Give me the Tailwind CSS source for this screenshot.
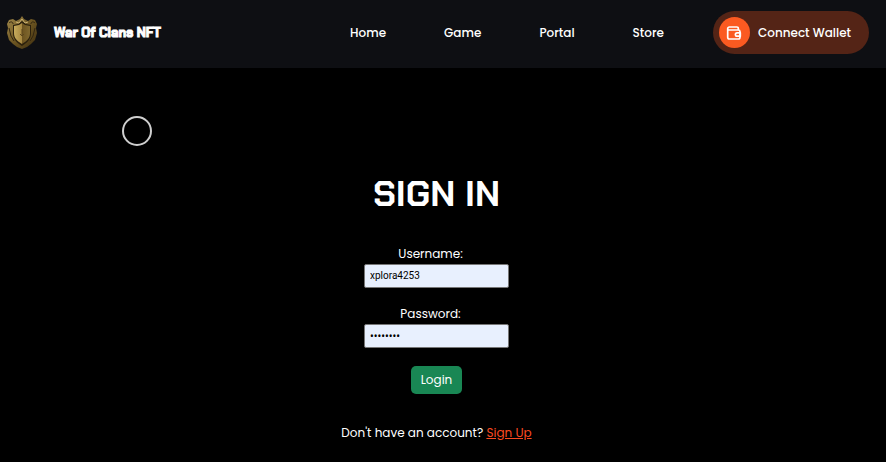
<!DOCTYPE html>
<html lang="en">
<head>
    <meta charset="UTF-8">
    <meta name="viewport" content="width=device-width, initial-scale=1.0">
    <title>War Of Clans NFT</title>
    <script src="https://cdn.jsdelivr.net/npm/@tailwindcss/browser@4"></script>
</head>
<body class="bg-black text-white font-['Poppins','Inter',sans-serif] text-[12px] leading-4 min-h-screen overflow-x-hidden">

    <!-- Navbar -->
    <header class="flex items-center justify-between bg-[#0e0f13] pl-1 pr-[17px] pt-[11px] pb-[14px]">
        <a href="#" class="flex items-center gap-4">
            <svg class="w-[34px] h-[34px]" viewBox="0 0 34 34" fill="none">
                <defs>
                    <linearGradient id="gold" x1="0" y1="0" x2="1" y2="1">
                        <stop offset="0" stop-color="#a38a4b"/>
                        <stop offset=".5" stop-color="#6d5622"/>
                        <stop offset="1" stop-color="#3b2b0d"/>
                    </linearGradient>
                    <linearGradient id="face" x1="0" y1="0" x2="1" y2="0">
                        <stop offset="0" stop-color="#c7ab5c"/>
                        <stop offset=".5" stop-color="#a68740"/>
                        <stop offset=".52" stop-color="#6d5420"/>
                        <stop offset="1" stop-color="#80682f"/>
                    </linearGradient>
                </defs>
                <path d="M18 0l2 3 4 2 3-2 4 1 2 4-1 4 1 5-2 7-4 4-4 3-5 2-5-2-4-3-4-4-2-7 1-5-1-4 2-4 4-1 3 2 4-2z" fill="url(#gold)"/>
                <path d="M18 5l4 3 5 1v8c0 6-4 10-9 13-5-3-9-7-9-13V9l5-1z" fill="#2c210d"/>
                <path d="M18 7l3 2 5 1v7c0 5-3 8-8 11-5-3-8-6-8-11v-7l5-1z" fill="url(#face)"/>
                <path d="M18 13v7M16 18l2 2 2-2" stroke="#5c461c"/>
                <path d="M5 7c2-2 4-1 4 1M31 7c-2-2-4-1-4 1M5 12l2 8 3 5M31 12l-2 8-3 5" stroke="#322510"/>
                <path d="M12 6l3 1 3-4 3 4 3-1" stroke="#c9b172"/>
            </svg>
            <span class="font-['Chakra_Petch','Roboto',sans-serif] font-bold text-[13px] [-webkit-text-stroke:1px_#fff]">War Of Clans NFT</span>
        </a>
        <div class="flex items-center gap-[49px]">
            <nav class="flex items-center gap-[58px] font-medium">
                <a href="#">Home</a>
                <a href="#">Game</a>
                <a href="#">Portal</a>
                <a href="#">Store</a>
            </nav>
            <button class="flex items-center gap-2 bg-[#542416] rounded-full py-[6px] pl-[6px] pr-[18px] font-medium">
                <span class="flex items-center justify-center w-[31px] h-[31px] rounded-full bg-[#fb5a21]">
                    <svg class="w-4 h-4" viewBox="0 0 16 16" fill="none" stroke="#fff" stroke-width="1.7" stroke-linejoin="round" stroke-linecap="round">
                        <path d="M12.3 5V3.4a1.4 1.4 0 0 0-1.4-1.4H3.4A1.7 1.7 0 0 0 1.7 3.7v8.6A1.7 1.7 0 0 0 3.4 14h8.9a1.7 1.7 0 0 0 1.7-1.7V6.6A1.7 1.7 0 0 0 12.3 5H2.5"/>
                        <path d="M14.3 7.8h-3.2a1.7 1.7 0 0 0 0 3.4h3.2z"/>
                    </svg>
                </span>
                Connect Wallet
            </button>
        </div>
    </header>

    <!-- Cursor ring -->
    <div class="absolute left-[122px] top-[116px] w-[30px] h-[30px] rounded-full border-2 border-[#cfcfcf]"></div>

    <!-- Sign in form -->
    <main class="flex flex-col items-center pt-[104px] pr-[13px]">
        <h1 class="font-['Chakra_Petch','Inter',sans-serif] font-bold text-[36px] leading-[44px]">SIGN IN</h1>
        <form class="flex flex-col items-center pt-[30px]">
            <label for="username" class="pr-3">Username:</label>
            <input id="username" type="text" value="xplora4253" class="w-[145px] h-6 mt-[2px] px-[5px] pb-[2px] rounded-xs border border-[#767676] bg-[#e8f0fe] text-black font-['Roboto',sans-serif] text-[10px]">
            <label for="password" class="pr-3 mt-[18px]">Password:</label>
            <input id="password" type="password" value="password" class="w-[145px] h-6 mt-[2px] px-[5px] rounded-xs border border-[#767676] bg-[#e8f0fe] text-black font-['Noto_Sans',sans-serif] text-[10px]">
            <button type="button" class="mt-[18px] px-[10px] py-[6px] rounded-[5px] bg-[#198754]">Login</button>
        </form>
        <p class="mt-[31px]">Don't have an account? <a href="#" class="text-[#fb4a21] underline">Sign Up</a></p>
    </main>

</body>
</html>
